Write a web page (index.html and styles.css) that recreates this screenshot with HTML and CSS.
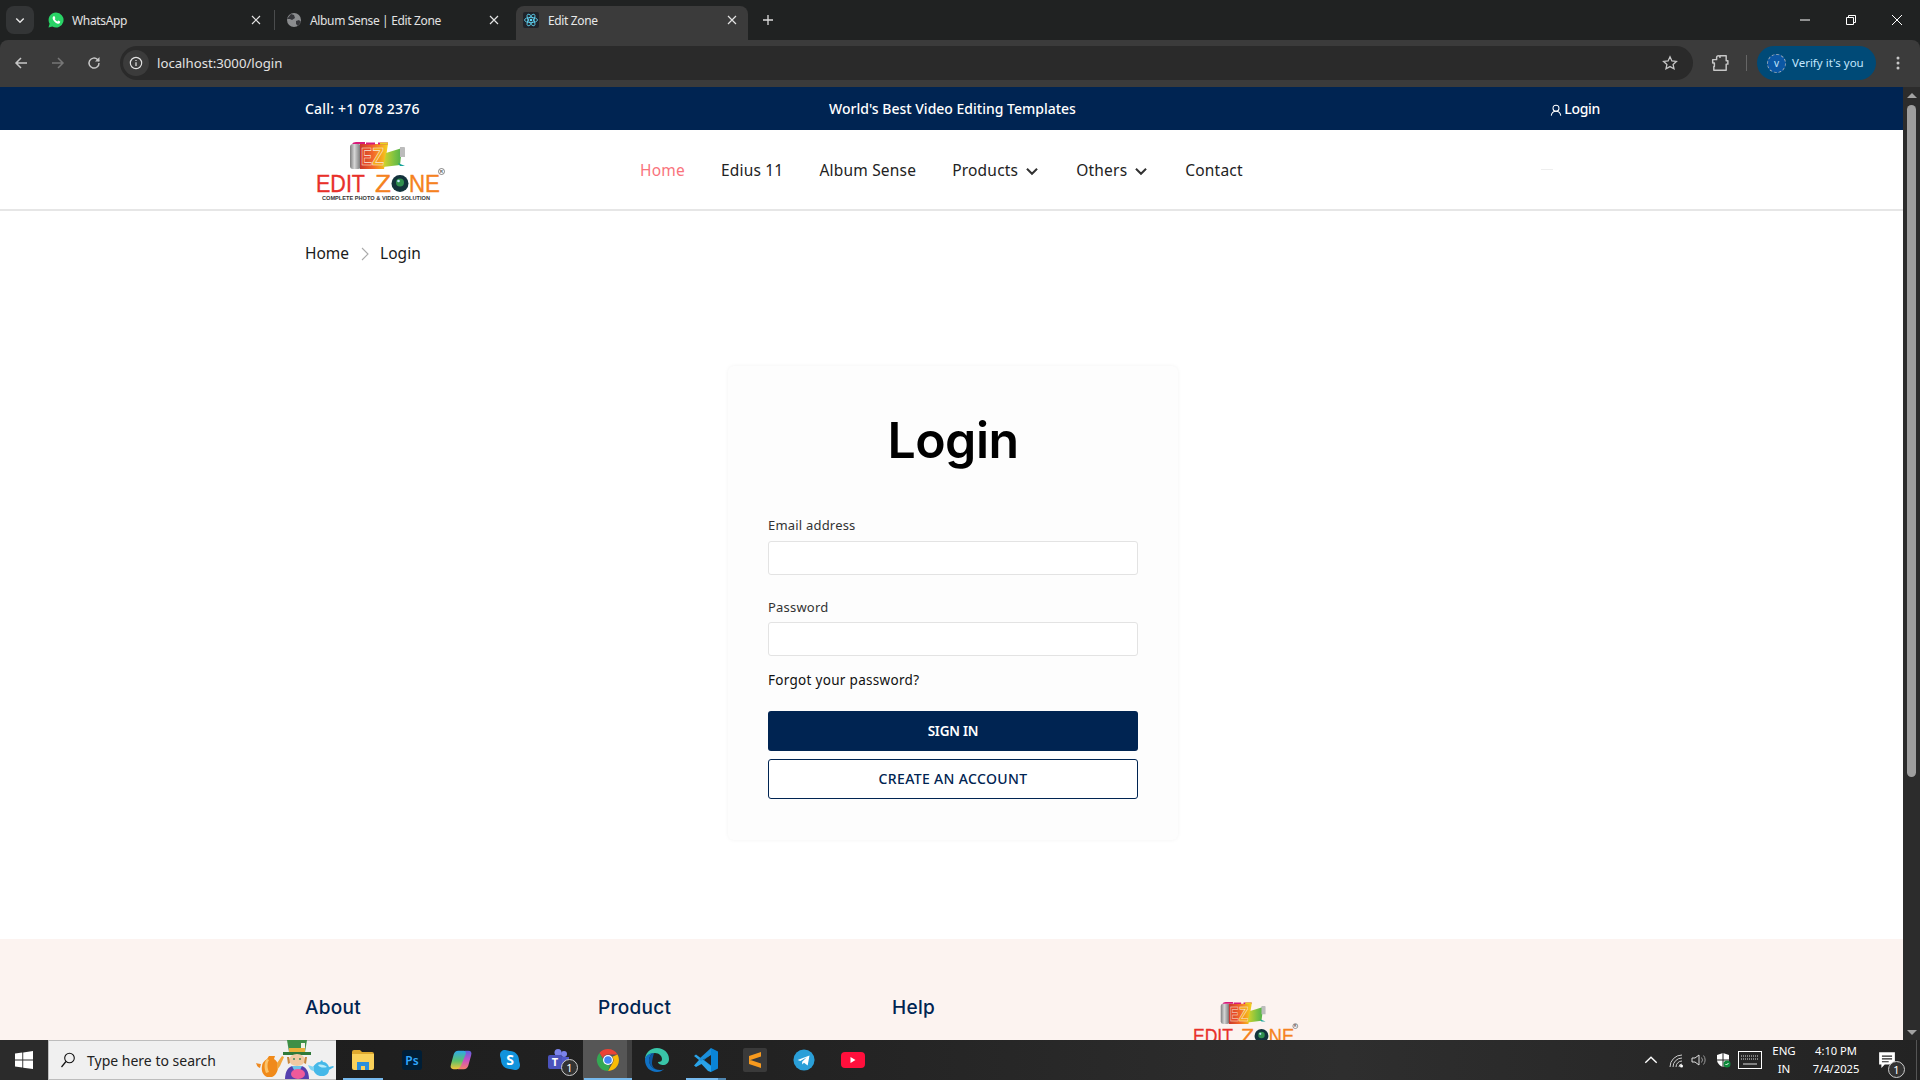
FILE: index.html
```html
<!DOCTYPE html>
<html lang="en">
<head>
<meta charset="utf-8">
<title>Edit Zone</title>
<link rel="stylesheet" href="styles.css">
</head>
<body>
<svg class="defs" width="0" height="0" aria-hidden="true">
  <defs>
    <linearGradient id="filmG" x1="0" x2="1" y1="0" y2="0">
      <stop offset="0" stop-color="#c9362a"/><stop offset=".45" stop-color="#f2662a"/><stop offset=".75" stop-color="#f6a21e"/><stop offset="1" stop-color="#f3d422"/>
    </linearGradient>
    <linearGradient id="rollG" x1="0" x2="1" y1="0" y2="0">
      <stop offset="0" stop-color="#7d7d7d"/><stop offset=".4" stop-color="#d6d6d6"/><stop offset="1" stop-color="#6f6f6f"/>
    </linearGradient>
    <linearGradient id="flagG" x1="0" x2="1" y1="0" y2="0">
      <stop offset="0" stop-color="#d8d32a"/><stop offset=".6" stop-color="#7cc242"/><stop offset="1" stop-color="#4fb04a"/>
    </linearGradient>
    <linearGradient id="copG" x1="0" x2="0" y1="0" y2="1">
      <stop offset="0" stop-color="#2fa8e8"/><stop offset=".55" stop-color="#5cc26a"/><stop offset="1" stop-color="#f4c53a"/>
    </linearGradient>
    <linearGradient id="copH" x1="0" x2="0" y1="0" y2="1">
      <stop offset="0" stop-color="#5a62e0"/><stop offset=".5" stop-color="#c94fc4"/><stop offset="1" stop-color="#f6806a"/>
    </linearGradient>
    <symbol id="logo" viewBox="0 0 130 62">
      <rect x="34" y="3" width="11" height="25" rx="3" fill="url(#rollG)"/>
      <path d="M44 3h28l-4 25H44z" fill="url(#filmG)"/>
      <path d="M36 3q1-2 4-2h9v2zM50 1.500h9v2h-9zM62 1.500h10l-.3 2H62z" fill="#d81b7a"/>
      <path d="M64 1.500h8l-.3 2H64z" fill="#e8d21e"/>
      <text x="45" y="24" class="logo-ez logo-ez-e" textLength="11" lengthAdjust="spacingAndGlyphs">E</text>
      <text x="56" y="24" class="logo-ez logo-ez-z" textLength="12" lengthAdjust="spacingAndGlyphs">Z</text>
      <path d="M70 12l16-5-2 17-17 2z" fill="url(#flagG)"/>
      <path d="M84 6h4q1 0 1 1v9h-5z" fill="#bcbcbc"/>
      <path d="M82 22l7 3-5 0z" fill="#16a39a"/>
      <text x="0" y="51" class="logo-word logo-red" textLength="49" lengthAdjust="spacingAndGlyphs">EDIT</text>
      <text x="59" y="51" class="logo-word logo-orange" textLength="16" lengthAdjust="spacingAndGlyphs">Z</text>
      <circle cx="84" cy="42.500" r="8.500" fill="#12323c"/>
      <circle cx="84" cy="41.500" r="4" fill="#2f8f4e"/>
      <circle cx="82.500" cy="40" r="1.300" fill="#bfe6ff"/>
      <text x="93" y="51" class="logo-word logo-orange" textLength="31" lengthAdjust="spacingAndGlyphs">NE</text>
      <text x="6" y="59" class="logo-tag" textLength="108" lengthAdjust="spacingAndGlyphs">COMPLETE PHOTO &amp; VIDEO SOLUTION</text>
      <circle cx="125.500" cy="30.500" r="3" fill="none" stroke="#555" stroke-width=".7"/>
      <text x="124" y="32.200" class="logo-r">R</text>
    </symbol>
    <symbol id="chev" viewBox="0 0 12 8"><path d="M1.500 1.500 6 6l4.500-4.500" fill="none" stroke="currentColor" stroke-width="1.800"/></symbol>
    <symbol id="x" viewBox="0 0 10 10"><path d="M1 1l8 8M9 1 1 9" fill="none" stroke="currentColor" stroke-width="1.200"/></symbol>
    <symbol id="globe" viewBox="0 0 16 16"><circle cx="8" cy="8" r="7" fill="#8b8d8f"/><path d="M5 2l3 1 1 3-3 2-2-1-3 0zM10 9l3-1 2 2-3 4-2-2z" fill="#35363a"/></symbol>
  </defs>
</svg>

<header class="browser">
  <div class="tabstrip">
    <div class="tab-search"><svg class="ico10" viewBox="0 0 12 8"><use href="#chev"/></svg></div>
    <div class="tab tab-1">
      <svg class="fav" viewBox="0 0 16 16"><path d="M8 .5a7.500 7.500 0 0 0-6.400 11.300L.5 15.500l3.800-1A7.500 7.500 0 1 0 8 .5z" fill="#29d366"/><path d="M5.400 4.300c-.9.800-1 2-.3 3.400.9 1.800 2.400 3.200 4.100 3.800 1.200.4 2.200.1 2.800-.8l.2-1.100-1.900-1-.9 1c-1.100-.4-2.100-1.300-2.700-2.500l.7-.9-.8-2z" fill="#fff"/></svg>
      <span class="tab-title">WhatsApp</span>
      <svg class="tab-x" viewBox="0 0 10 10"><use href="#x"/></svg>
    </div>
    <div class="tab-sep"></div>
    <div class="tab tab-2">
      <svg class="fav" viewBox="0 0 16 16"><use href="#globe"/></svg>
      <span class="tab-title">Album Sense | Edit Zone</span>
      <svg class="tab-x" viewBox="0 0 10 10"><use href="#x"/></svg>
    </div>
    <div class="tab tab-active">
      <svg class="fav" viewBox="0 0 16 16"><rect width="16" height="16" rx="2" fill="#20232a"/><g fill="none" stroke="#61dafb" stroke-width=".8"><ellipse cx="8" cy="8" rx="6.500" ry="2.600"/><ellipse cx="8" cy="8" rx="6.500" ry="2.600" transform="rotate(60 8 8)"/><ellipse cx="8" cy="8" rx="6.500" ry="2.600" transform="rotate(120 8 8)"/></g><circle cx="8" cy="8" r="1.300" fill="#61dafb"/></svg>
      <span class="tab-title">Edit Zone</span>
      <svg class="tab-x" viewBox="0 0 10 10"><use href="#x"/></svg>
    </div>
    <svg class="tab-plus" viewBox="0 0 12 12"><path d="M6 1v10M1 6h10" stroke="#dcdcdc" stroke-width="1.300"/></svg>
    <div class="win-controls">
      <svg class="win-btn" viewBox="0 0 12 12"><path d="M1 6h10" stroke="#fff"/></svg>
      <svg class="win-btn" viewBox="0 0 12 12"><path d="M1.500 3.500h7v7h-7zM3.500 3.500v-2h7v7h-2" fill="none" stroke="#fff"/></svg>
      <svg class="win-btn" viewBox="0 0 12 12"><path d="M1 1l10 10M11 1 1 11" stroke="#fff"/></svg>
    </div>
  </div>
  <div class="toolbar">
    <svg class="tb-ico" viewBox="0 0 16 16"><path d="M14 8H3M8 3 3 8l5 5" fill="none" stroke="#c7c7c7" stroke-width="1.500"/></svg>
    <svg class="tb-ico" viewBox="0 0 16 16"><path d="M2 8h11M8 3l5 5-5 5" fill="none" stroke="#777" stroke-width="1.500"/></svg>
    <svg class="tb-ico" viewBox="0 0 16 16"><path d="M13 8a5 5 0 1 1-1.500-3.500L13 6" fill="none" stroke="#c7c7c7" stroke-width="1.500"/><path d="M13.500 2v4.500H9z" fill="#c7c7c7"/></svg>
    <div class="omnibox">
      <div class="omni-info"><svg viewBox="0 0 16 16" class="ico14"><circle cx="8" cy="8" r="6.500" fill="none" stroke="#e3e3e3" stroke-width="1.300"/><path d="M8 7v4.500M8 4.500v1.300" stroke="#e3e3e3" stroke-width="1.400"/></svg></div>
      <span class="omni-url">localhost:3000/login</span>
      <svg class="omni-star" viewBox="0 0 16 16"><path d="M8 1.800l1.900 4.100 4.500.5-3.300 3 .9 4.400L8 11.600l-4 2.200.9-4.400-3.300-3 4.500-.5z" fill="none" stroke="#c7c7c7" stroke-width="1.300"/></svg>
    </div>
    <svg class="tb-puzzle" viewBox="0 0 16 16"><path d="M1.500 5H5V3a1.500 1.500 0 0 1 3 0v0-1.500h5.500V6H15v3h-1.500v5.500h-11V11H3V8H1.500z" fill="none" stroke="#c7c7c7" stroke-width="1.300" stroke-linejoin="round"/></svg>
    <div class="tb-sep"></div>
    <div class="verify">
      <span class="verify-avatar">v</span>
      <span class="verify-text">Verify it's you</span>
    </div>
    <svg class="tb-menu" viewBox="0 0 4 16"><circle cx="2" cy="3" r="1.500" fill="#c7c7c7"/><circle cx="2" cy="8" r="1.500" fill="#c7c7c7"/><circle cx="2" cy="13" r="1.500" fill="#c7c7c7"/></svg>
  </div>
</header>

<div class="viewport">
  <main class="page">
    <div class="topbar">
      <div class="container topbar-in">
        <span>Call: +1 078 2376</span>
        <span class="topbar-mid">World's Best Video Editing Templates</span>
        <a class="topbar-login"><svg class="user-ico" viewBox="0 0 14 14"><circle cx="7" cy="5" r="3.500" fill="none" stroke="#fff" stroke-width="1.200"/><path d="M1.500 13.500c.4-3 2.500-5 5.500-5s5.100 2 5.500 5" fill="none" stroke="#fff" stroke-width="1.200"/></svg>Login</a>
      </div>
    </div>
    <nav class="mainnav">
      <div class="container mainnav-in">
        <svg class="logo-head" viewBox="0 0 130 62"><use href="#logo"/></svg>
        <ul class="menu">
          <li class="menu-active">Home</li>
          <li>Edius 11</li>
          <li>Album Sense</li>
          <li>Products<svg class="menu-chev" viewBox="0 0 12 8"><use href="#chev"/></svg></li>
          <li>Others<svg class="menu-chev" viewBox="0 0 12 8"><use href="#chev"/></svg></li>
          <li>Contact</li>
        </ul>
        <span class="nav-dash"></span>
      </div>
    </nav>
    <div class="container crumbs">
      <span>Home</span>
      <svg class="crumb-sep" viewBox="0 0 8 14"><path d="M1 1l6 6-6 6" fill="none" stroke="#aaa" stroke-width="1.100"/></svg>
      <span>Login</span>
    </div>
    <section class="login-wrap">
      <form class="card">
        <h1 class="card-title">Login</h1>
        <label class="field-label" for="em">Email address</label>
        <input id="em" class="field-input" type="email">
        <label class="field-label field-label-2" for="pw">Password</label>
        <input id="pw" class="field-input" type="password">
        <a class="forgot">Forgot your password?</a>
        <button type="button" class="btn btn-solid">SIGN IN</button>
        <button type="button" class="btn btn-outline">CREATE AN ACCOUNT</button>
      </form>
    </section>
    <footer class="footer">
      <div class="container footer-in">
        <h3 class="foot-head">About</h3>
        <h3 class="foot-head">Product</h3>
        <h3 class="foot-head">Help</h3>
        <svg class="logo-foot" viewBox="0 0 130 62"><use href="#logo"/></svg>
      </div>
    </footer>
  </main>
  <aside class="scrollbar">
    <span class="sb-up"></span>
    <span class="sb-thumb"></span>
    <span class="sb-spacer"></span>
    <span class="sb-down"></span>
  </aside>
</div>

<footer class="taskbar">
  <div class="start"><svg class="ico18" viewBox="0 0 16 16"><path d="M0 2.300l6.500-.9v6.200H0zM7.300 1.300 16 0v7.600H7.300zM0 8.400h6.500v6.200L0 13.700zM7.300 8.400H16V16l-8.700-1.200z" fill="#fff"/></svg></div>
  <div class="search">
    <svg class="ico16" viewBox="0 0 16 16"><circle cx="9.500" cy="6" r="4.800" fill="none" stroke="#111" stroke-width="1.100"/><path d="M6 9.500 1.500 15" stroke="#111" stroke-width="1.200"/></svg>
    <span class="search-text">Type here to search</span>
    <svg class="doodle" viewBox="0 0 80 40">
      <path d="M15 17h6l-1 3c3 2 4 4 4 8 0 5-3 9-6 10h-5c-4-2-6-6-5-11 0-3 2-5 5-7z" fill="#f08a1a"/>
      <path d="M13 20c-3 3-3 9-1 14l3-1c-2-4-2-9 0-12z" fill="#fbc36a"/>
      <path d="M23 24l5-7 2 1-4 9-3 4z" fill="#f2a53a"/>
      <path d="M7 25c-3 0-4-1-5-1 1 2 1 4 4 5z" fill="#ee8a22"/>
      <path d="M33 1h20l-2 12H35z" fill="#3d8f46"/>
      <path d="M29 13h28v3H29z" fill="#2f7a3a"/>
      <rect x="35" y="9" width="16" height="4" fill="#e9b13a"/>
      <rect x="47" y="4" width="4" height="5" fill="#f2f2e4"/>
      <ellipse cx="43" cy="21" rx="8" ry="6" fill="#f1c9a3"/>
      <path d="M35 18h-2l1 7 2-1zM51 18h2l-1 7-2-1z" fill="#c7873c"/>
      <circle cx="40" cy="20" r="1" fill="#3f8a57"/><circle cx="46" cy="20" r="1" fill="#3f8a57"/>
      <path d="M31 40c0-8 4-13 8-13h8c4 0 8 5 8 13z" fill="#5540ae"/>
      <path d="M38 27h10l-2 4h-6z" fill="#6fc3ea"/>
      <ellipse cx="44" cy="35" rx="7" ry="5" fill="#ee5a9a"/>
      <path d="M59 28c0 5 3 8 7 9h4c3-1 5-3 5-6l5-3-1-1-4 1c-1-3-3-5-6-5l-1-2-2 2c-3 0-5 2-7 5z" fill="#45b8e8"/>
      <path d="M60 28l-6-2c1 3 3 6 6 6z" fill="#7fd3f2"/>
      <path d="M64 26c3-1 7 0 9 2-3 1-7 1-9-2z" fill="#b8ecfb"/>
    </svg>
  </div>
  <div class="apps">
    <div class="app app-run"><svg class="ico-folder" viewBox="0 0 22 20"><path d="M0 2q0-2 2-2h6l2 2h10q2 0 2 2v2H0z" fill="#dfa92e"/><path d="M0 4h22v14q0 2-2 2H2q-2 0-2-2z" fill="#fad15a"/><path d="M5 20v-8h12v8h-4v-4H9v4z" fill="#2a8fdc"/></svg></div>
    <div class="app"><svg class="ico20" viewBox="0 0 20 20"><rect width="20" height="20" rx="3" fill="#001e36"/><text x="10" y="14.500" class="ps-text">Ps</text></svg></div>
    <div class="app"><svg class="ico22" viewBox="0 0 24 24"><path d="M15 22H9c-2 0-3-2-2-4L12 6c1-2.500 3-4 5-4h3c3 0 4 2 3 5l-3 11c-.7 2.500-2.500 4-5 4z" fill="url(#copH)"/><path d="M9 2h6c2 0 3 2 2 4l-5 12c-1 2.500-3 4-5 4H4c-3 0-4-2-3-5L4 6c.7-2.500 2.500-4 5-4z" fill="url(#copG)"/></svg></div>
    <div class="app"><svg class="ico22" viewBox="0 0 22 22"><path d="M6 1c2 0 3 1 5 1 5 0 9 4 9 9 0 2 1 3 1 5 0 3-2 5-5 5-2 0-3-1-5-1-5 0-9-4-9-9 0-2-1-3-1-5 0-3 2-5 5-5z" fill="#1193dc"/><text x="11" y="16" class="sk-text">S</text></svg></div>
    <div class="app app-teams"><svg class="ico24" viewBox="0 0 24 24"><circle cx="17" cy="6" r="3" fill="#7b83eb"/><circle cx="11" cy="4.500" r="3.500" fill="#7b83eb"/><path d="M13 9h9v8a4 4 0 0 1-4 4h-5z" fill="#5059c9"/><rect x="1" y="7" width="14" height="14" rx="2" fill="#4b53bc"/><text x="8" y="18" class="tm-text">T</text></svg><span class="badge">1</span></div>
    <div class="app app-active"><svg class="ico24" viewBox="0 0 24 24"><path d="M12 1a11 11 0 0 1 9.500 5.500H12a5.500 5.500 0 0 0-5.200 3.700L3.400 5A11 11 0 0 1 12 1z" fill="#ea4335"/><path d="M21.500 6.500A11 11 0 0 1 12 23l4.800-8.200a5.500 5.500 0 0 0-.5-6z" fill="#fbbc05"/><path d="M12 23A11 11 0 0 1 3.400 5l4.800 8.300A5.500 5.500 0 0 0 14 17z" fill="#34a853"/><circle cx="12" cy="12" r="5" fill="#fff"/><circle cx="12" cy="12" r="3.800" fill="#4285f4"/></svg></div>
    <div class="app"><svg class="ico24" viewBox="0 0 24 24"><path d="M12 0c7 0 12 5 12 11 0 4-3 6-6 6-2 0-5-1-5-3 3 0 4-1 4-3 0-3-3-6-7-6C5 5 1 8 0 12 0 5 5 0 12 0z" fill="#39c5a8"/><path d="M0 12c0-4 4-7 9-7-3 1-5 4-5 7 0 6 5 10 11 10 2 0 3-.5 4-1-2 2-4 3-7 3C5 24 0 19 0 12z" fill="#1071c4"/><path d="M9 5c-3 1-5 4-5 7 0 6 5 10 11 10-5 0-8-3-8-7 0-3 1-6 2-10z" fill="#0c59a4"/></svg></div>
    <div class="app app-run app-run-code"><svg class="ico24" viewBox="0 0 24 24"><path d="M17 0l7 3.400v17.200L17 24 7 13.500 17 6z" fill="#0a84d6"/><path d="M17 6.500 10 12l7 5.500z" fill="#232323"/><path d="M0 8l2-1.500L17 18v6l-3-1-6.500-7L2 19 0 17.500 5 12z" fill="#2aa3e8"/><path d="M17 0v7L7 13l-2-2z" fill="#1a8fdc"/></svg></div>
    <div class="app"><svg class="ico24" viewBox="0 0 24 24"><rect width="24" height="24" rx="2" fill="#3a3a3a"/><path d="M18 4v4.500L6 12.500V8zM6 11.500l12 4v4.500L6 16z" fill="#f79a1e"/></svg></div>
    <div class="app"><svg class="ico22" viewBox="0 0 24 24"><circle cx="12" cy="12" r="11.500" fill="#2a9fd8"/><path d="M5 12l13-5-2 11-4-3-2 2v-3l5-5-7 4z" fill="#fff"/></svg></div>
    <div class="app"><svg class="ico-yt" viewBox="0 0 24 16"><rect width="24" height="16" rx="4" fill="#ff0f3c"/><path d="M9.500 5v6l5-3z" fill="#fff"/></svg></div>
  </div>
  <div class="tray">
    <svg class="tray-ico" viewBox="0 0 14 14"><path d="M2 9.500 7 4.500l5 5" fill="none" stroke="#fff" stroke-width="1.200"/></svg>
    <svg class="tray-ico tray-wifi" viewBox="0 0 16 16"><path d="M2 15A12 12 0 0 1 14 3M5 15a9 9 0 0 1 9-9M8 15a6 6 0 0 1 6-6M11 15a3 3 0 0 1 3-3" fill="none" stroke="#cfcfcf" stroke-width="1"/><circle cx="13.500" cy="14" r="1.500" fill="#fff"/></svg>
    <svg class="tray-ico tray-vol" viewBox="0 0 16 16"><path d="M1 6v4h3l4 3V3L4 6z" fill="none" stroke="#e0e0e0"/><path d="M10.500 5.500a4 4 0 0 1 0 5M12.500 3.500a7 7 0 0 1 0 9" fill="none" stroke="#999"/></svg>
    <svg class="tray-ico tray-shield" viewBox="0 0 16 16"><path d="M8 1l6 2v5c0 3-3 6-6 7-3-1-6-4-6-7V3z" fill="#fff"/><path d="M8 1v14M2 8h12" stroke="#222"/><circle cx="12" cy="12" r="3.500" fill="#0f8a3c"/><path d="M10.500 12l1 1 2-2" fill="none" stroke="#fff"/></svg>
    <svg class="tray-kbd" viewBox="0 0 24 18"><rect x=".5" y=".5" width="23" height="17" fill="none" stroke="#fff"/><path d="M3 5h18M3 8h18" stroke="#ddd" stroke-dasharray="1 1"/><path d="M5 13h14" stroke="#ddd"/></svg>
    <div class="tray-lang"><span>ENG</span><span>IN</span></div>
    <div class="tray-clock"><span>4:10 PM</span><span>7/4/2025</span></div>
    <div class="tray-note"><svg class="ico18" viewBox="0 0 16 16"><path d="M1 1h14v11H6l-3 3v-3H1z" fill="#fff"/><path d="M3.500 4.500h9M3.500 7h9M3.500 9.500h6" stroke="#222"/></svg><span class="badge badge-note">1</span></div>
    <span class="show-desktop"></span>
  </div>
</footer>
</body>
</html>
```

FILE: styles.css
```css
* { box-sizing: border-box; }
html, body { margin: 0; height: 100%; overflow: hidden; }
body {
  display: flex;
  flex-direction: column;
  height: 1080px;
  font-family: "Noto Sans", "Open Sans", sans-serif;
  background: #fff;
  color: #222;
}
svg { display: block; flex: none; }
.defs { position: absolute; }
.ico10 { width: 10px; height: 7px; color: #e3e3e3; }
.ico14 { width: 14px; height: 14px; }
.ico16 { width: 16px; height: 16px; }
.ico18 { width: 18px; height: 18px; }
.ico20 { width: 20px; height: 20px; }
.ico22 { width: 22px; height: 22px; }
.ico24 { width: 24px; height: 24px; }
.ico-folder { width: 22px; height: 20px; }
.ico-yt { width: 24px; height: 16px; }

/* browser chrome */
.browser { flex: none; height: 87px; background: #202222; color: #e3e3e3; font-size: 12px; }
.tabstrip { height: 40px; display: flex; align-items: flex-end; padding-left: 6px; position: relative; }
.tab-search { width: 28px; height: 28px; margin-bottom: 6px; margin-right: 2px; border-radius: 8px; background: #333536; display: flex; align-items: center; justify-content: center; flex: none; }
.tab { height: 34px; padding: 0 12px 6px; display: flex; align-items: center; gap: 8px; border-radius: 8px 8px 0 0; flex: none; }
.tab-1 { width: 237px; margin-right: 1px; }
.tab-2 { width: 236px; margin-right: 5px; padding-left: 11px; }
.tab-active { width: 232px; background: #3b3b3b; color: #e8e8e8; padding-left: 7px; padding-right: 11px; gap: 9px; }
.fav { width: 16px; height: 16px; }
.tab-title { flex: 1; white-space: nowrap; letter-spacing: -.35px; }
.tab-x { width: 10px; height: 10px; color: #e3e3e3; }
.tab-sep { width: 1px; height: 20px; background: #4a4c4d; margin-bottom: 10px; flex: none; }
.tab-plus { width: 12px; height: 12px; margin: 0 0 14px 14px; }
.win-controls { margin-left: auto; align-self: flex-start; display: flex; gap: 34px; padding: 14px 17px 0 0; }
.win-btn { width: 12px; height: 12px; }

.toolbar { height: 47px; background: #3b3b3b; display: flex; align-items: center; padding: 0 0 1px 13px; border-radius: 8px 8px 0 0; }
.tb-ico { width: 16px; height: 16px; margin-right: 20.500px; }
.omnibox { width: 1573px; height: 34px; margin-left: -2.500px; border-radius: 17px; background: #2a2a2a; display: flex; align-items: center; padding: 0 15px 0 3px; }
.omni-info { width: 26px; height: 26px; border-radius: 13px; background: #3b3b3b; display: flex; align-items: center; justify-content: center; }
.omni-url { margin-left: 8px; font-size: 13.200px; color: #e3e3e3; flex: 1; }
.omni-star { width: 16px; height: 16px; }
.tb-puzzle { width: 18px; height: 18px; margin-left: 18px; }
.tb-sep { width: 1px; height: 16px; background: #666; margin-left: 17px; }
.verify { width: 119px; height: 34px; margin-left: 10px; border-radius: 17px; background: #004a77; color: #c2e7ff; display: flex; align-items: center; gap: 6px; padding-left: 10px; font-size: 11.500px; white-space: nowrap; }
.verify-text { margin-top: -2px; }
.verify-avatar { width: 19px; height: 19px; border-radius: 50%; background: #0b57a4; border: 1px dashed #9ab; color: #c2e7ff; display: flex; align-items: center; justify-content: center; font-size: 10px; line-height: 1; }
.tb-menu { width: 4px; height: 16px; margin-left: 20px; }

/* page viewport */
.viewport { flex: 1; min-height: 0; display: flex; }
.page { flex: 1; min-width: 0; overflow: hidden; display: flex; flex-direction: column; }
.container { width: 1295px; margin-left: 305px; }

.topbar { flex: none; height: 43px; background: #002452; color: #fff; font-size: 14px; font-weight: 500; letter-spacing: .2px; }
.topbar-in { height: 100%; display: grid; grid-template-columns: 1fr auto 1fr; align-items: center; }
.topbar-mid { letter-spacing: 0; }
.topbar-login { justify-self: end; display: flex; align-items: center; gap: 2px; letter-spacing: -.3px; }
.user-ico { width: 12px; height: 12px; margin-top: 3px; }

.mainnav { flex: none; height: 81px; border-bottom: 2px solid #e6e6e6; background: #fff; }
.mainnav-in { height: 100%; display: flex; align-items: center; position: relative; }
.logo-head { width: 130px; height: 62px; margin-left: 11px; margin-top: 4px; }
.menu { list-style: none; margin: 0 0 0 194px; padding: 0; display: flex; gap: 36px; font-size: 15.500px; letter-spacing: .2px; color: #222; }
.menu li { display: flex; align-items: center; white-space: nowrap; }
.menu-active { color: #f9737c; }
.menu-chev { width: 14px; height: 9px; margin: 3px 1px 0 7px; color: #333; }
.nav-dash { position: absolute; left: 1236px; top: 39px; width: 12px; height: 1px; background: #eee; }

.logo-ez { font: 800 24px "Liberation Sans", sans-serif; stroke: #f6e9dc; stroke-width: .7px; }
.logo-ez-e { fill: #e8492a; }
.logo-ez-z { fill: #f7a81e; }
.logo-word { font: 400 24px "Liberation Sans", sans-serif; stroke-width: .35px; }
.logo-red { fill: #e8302a; stroke: #e8302a; }
.logo-orange { fill: #f58220; stroke: #f58220; }
.logo-tag { font: 700 5.200px "Liberation Sans", sans-serif; fill: #333; }
.logo-r { font: 700 4px "Liberation Sans", sans-serif; fill: #555; }

.crumbs { flex: none; height: 24px; margin-top: 30px; display: flex; align-items: center; font-size: 15.500px; color: #1a1a1a; }
.crumb-sep { width: 8px; height: 14px; margin: 2px 11px 0 12px; }

.login-wrap { flex: none; display: flex; justify-content: center; padding: 101px 0 99px; }
.card { width: 450px; height: 474px; padding: 40px; margin-left: 3px; background: #fdfdfd; border-radius: 6px; box-shadow: 0 0 4px rgba(0,0,0,.05); display: flex; flex-direction: column; }
.card-title { margin: -1px 0 40px; height: 70px; line-height: 70px; text-align: center; font-family: Inter, sans-serif; font-size: 50px; font-weight: 600; color: #000; letter-spacing: -.5px; }
.field-label { font-size: 13px; line-height: 20px; letter-spacing: .2px; color: #333; margin-bottom: 6px; }
.field-label-2 { margin-top: 22px; margin-bottom: 5px; }
.field-input { width: 100%; height: 34px; flex: none; border: 1px solid #e3e3e3; border-radius: 3px; background: #fff; outline: none; }
.forgot { margin-top: 14px; font-size: 13.500px; line-height: 20px; letter-spacing: .3px; color: #111; }
.btn { width: 100%; height: 40px; flex: none; border-radius: 3px; cursor: pointer; font-family: "Noto Sans", sans-serif; font-size: 14px; }
.btn-solid { margin-top: 21px; background: #002452; color: #fff; border: 0; font-weight: 600; font-size: 13.500px; letter-spacing: -.2px; }
.btn-outline { margin-top: 8px; background: #fff; color: #002452; border: 1px solid #002452; font-weight: 500; letter-spacing: .35px; line-height: 36px; padding: 0 0 1px; }

.footer { flex: 1; min-height: 200px; background: #fcf3f0; padding-top: 56px; }
.footer-in { display: grid; grid-template-columns: 293px 294px 300.500px 1fr; align-items: start; }
.foot-head { margin: 0; font-family: Inter, sans-serif; font-size: 19px; line-height: 26px; font-weight: 500; color: #002452; letter-spacing: .3px; }
.logo-foot { width: 106px; height: 51px; margin-top: 6px; }

.scrollbar { flex: none; width: 17px; background: #2c2c2c; display: flex; flex-direction: column; align-items: center; }
.sb-up { margin-top: 6px; width: 0; height: 0; border: 5px solid transparent; border-top: 0; border-bottom: 5px solid #a3a3a3; }
.sb-thumb { margin-top: 7px; width: 9px; height: 672px; background: #9e9e9e; border-radius: 4.500px; }
.sb-spacer { flex: 1; }
.sb-down { margin-bottom: 5px; width: 0; height: 0; border: 5px solid transparent; border-bottom: 0; border-top: 5px solid #a3a3a3; }

/* taskbar */
.taskbar { flex: none; height: 40px; background: linear-gradient(90deg, #1c1c1c 0, #222 40%, #2e2e2e 70%, #232323 100%); display: flex; align-items: center; color: #fff; }
.start { width: 48px; height: 40px; display: flex; align-items: center; justify-content: center; background: #2b2b2b; flex: none; }
.search { width: 288px; height: 40px; background: #f0f0f0; border: 1px solid #bdbdbd; border-width: 1px 0 1px 1px; display: flex; align-items: center; padding-left: 11px; color: #222; position: relative; flex: none; }
.search-text { margin-left: 11px; font-size: 14px; }
.doodle { position: absolute; left: 205px; bottom: 0; width: 80px; height: 40px; }
.apps { display: flex; height: 40px; margin-left: 2px; }
.app { width: 49px; height: 40px; display: flex; align-items: center; justify-content: center; position: relative; }
.app-active { background: linear-gradient(90deg, #565656 0, #565656 90%, #3f3f3f 90%); }
.app-active::after { content: ""; position: absolute; left: 1px; right: 0; bottom: 0; height: 2px; background: #76b9ed; }
.app-run::after { content: ""; position: absolute; left: 5px; right: 4px; bottom: 0; height: 2px; background: #76b9ed; }
.app-run-code::after { left: 5px; right: 12px; box-shadow: 8px 0 0 #4f86b0; }
.badge { position: absolute; right: 5px; bottom: 4px; width: 17px; height: 17px; border-radius: 50%; background: #333; border: 1px solid #ccc; color: #fff; font-size: 11px; display: flex; align-items: center; justify-content: center; line-height: 1; }
.ps-text { font: 600 12px "Noto Sans", sans-serif; fill: #31a8ff; text-anchor: middle; }
.sk-text { font: 700 14px "Noto Sans", sans-serif; fill: #fff; text-anchor: middle; }
.tm-text { font: 700 11px "Noto Sans", sans-serif; fill: #fff; text-anchor: middle; }
.tray { margin-left: auto; display: flex; align-items: center; height: 40px; }
.tray-ico { width: 16px; height: 16px; }
.tray-wifi { margin-left: 9px; }
.tray-vol { margin-left: 7px; }
.tray-shield { margin-left: 8px; }
.tray-kbd { width: 24px; height: 18px; margin-left: 7px; }
.tray-lang { margin-left: 9px; width: 26px; display: flex; flex-direction: column; align-items: center; font-size: 11.500px; line-height: 18px; }
.tray-clock { margin-left: 8px; width: 62px; display: flex; flex-direction: column; align-items: center; font-size: 11.200px; line-height: 18px; }
.tray-note { width: 40px; height: 40px; display: flex; align-items: center; justify-content: center; position: relative; }
.badge-note { right: 2px; bottom: 2px; }
.show-desktop { width: 1px; height: 40px; margin: 0 3px 0 9px; background: #555; }
```
